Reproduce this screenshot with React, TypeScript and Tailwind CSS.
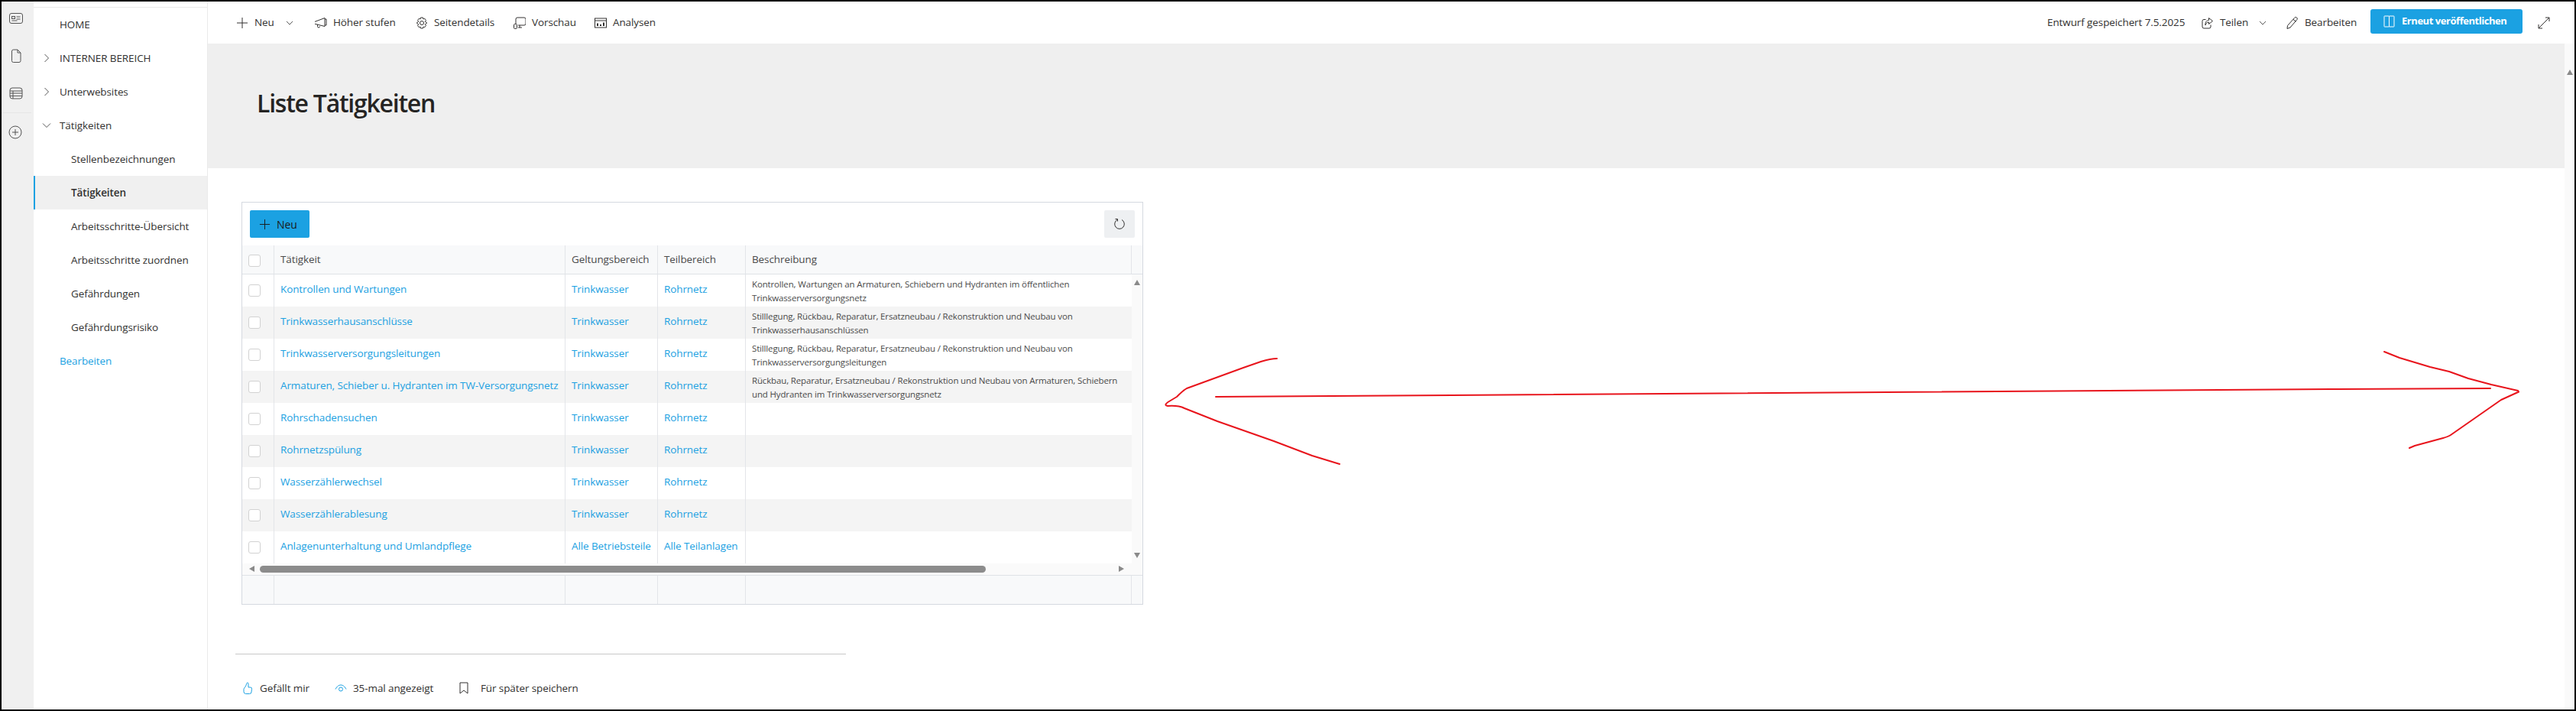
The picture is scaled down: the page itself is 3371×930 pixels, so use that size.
import React from "react";

const Ico = ({ children, className = "", size = 16, vb = 16 }: { children: React.ReactNode; className?: string; size?: number; vb?: number }) => (
  <svg width={size} height={size} viewBox={`0 0 ${vb} ${vb}`} fill="none" stroke="currentColor" strokeWidth="1" className={`shrink-0 ${className}`}>
    {children}
  </svg>
);

const Plus = ({ size = 16 }: { size?: number }) => <Ico size={size}><path d="M8 1v14M1 8h14" /></Ico>;
const ChevDown = () => <Ico size={10} vb={10}><path d="M1 3l4 4 4-4" /></Ico>;

const rows = [
  ["Kontrollen und Wartungen", "Trinkwasser", "Rohrnetz", "Kontrollen, Wartungen an Armaturen, Schiebern und Hydranten im öffentlichen", "Trinkwasserversorgungsnetz"],
  ["Trinkwasserhausanschlüsse", "Trinkwasser", "Rohrnetz", "Stilllegung, Rückbau, Reparatur, Ersatzneubau / Rekonstruktion und Neubau von", "Trinkwasserhausanschlüssen"],
  ["Trinkwasserversorgungsleitungen", "Trinkwasser", "Rohrnetz", "Stilllegung, Rückbau, Reparatur, Ersatzneubau / Rekonstruktion und Neubau von", "Trinkwasserversorgungsleitungen"],
  ["Armaturen, Schieber u. Hydranten im TW-Versorgungsnetz", "Trinkwasser", "Rohrnetz", "Rückbau, Reparatur, Ersatzneubau / Rekonstruktion und Neubau von Armaturen, Schiebern", "und Hydranten im Trinkwasserversorgungsnetz"],
  ["Rohrschadensuchen", "Trinkwasser", "Rohrnetz", "", ""],
  ["Rohrnetzspülung", "Trinkwasser", "Rohrnetz", "", ""],
  ["Wasserzählerwechsel", "Trinkwasser", "Rohrnetz", "", ""],
  ["Wasserzählerablesung", "Trinkwasser", "Rohrnetz", "", ""],
  ["Anlagenunterhaltung und Umlandpflege", "Alle Betriebsteile", "Alle Teilanlagen", "", ""],
];

const Check = () => <div className="ml-2 w-4 h-4 rounded-[3px] border border-[#d2d2d2] bg-white" />;

const NavItem = ({ label, chevron, indent, active, link }: { label: string; chevron?: "r" | "d"; indent?: boolean; active?: boolean; link?: boolean }) => (
  <div className={`h-11 flex items-center ${active ? "bg-[#f0f0f0] border-l-2 border-[#1ba1e2] font-semibold" : ""} ${link ? "text-[#1ba1e2]" : "text-[#323130]"}`}>
    <div className={`${active ? "w-[9px]" : "w-[11px]"} shrink-0`} />
    <div className="w-[12px] shrink-0 flex justify-center text-[#555]">
      {chevron === "r" && <Ico size={12} vb={12}><path d="M3.5 1l5 5-5 5" /></Ico>}
      {chevron === "d" && <Ico size={12} vb={12}><path d="M1 3.5l5 5 5-5" /></Ico>}
    </div>
    <div className={`${indent ? "w-[26px]" : "w-[11px]"} shrink-0`} />
    <span className="whitespace-nowrap">{label}</span>
  </div>
);

const CmdItem = ({ icon, label, className, gap = "ml-2" }: { icon: React.ReactNode; label: string; className: string; gap?: string }) => (
  <div className={`flex items-center shrink-0 ${className}`}>
    <span className="w-4 flex justify-center text-[#323130]">{icon}</span>
    <span className={`${gap} whitespace-nowrap`}>{label}</span>
  </div>
);

export default function App() {
  return (
    <div className="relative w-[3371px] h-[930px] box-border border-2 border-black bg-white overflow-hidden flex text-[13.5px] text-[#323130] font-['Open_Sans','Noto_Sans',sans-serif] tracking-[-0.1px]">
      {/* Rail */}
      <div className="w-[42px] shrink-0 bg-[#f0f0f0] flex flex-col text-[#555]">
        <div className="h-[146px] flex flex-col items-center pt-[13px] gap-[31px] pr-[2px] border-b border-[#e6e6e6] mr-[3px]">
          <Ico size={18} vb={18}><rect x="0.5" y="2.5" width="17" height="13" rx="2.5" /><rect x="3.5" y="6.5" width="4" height="3" /><path d="M9.5 7h5M9.5 10h5M3.5 12h7" /></Ico>
          <Ico size={18} vb={18}><path d="M3.5 3a2 2 0 0 1 2-2H11l4 4v10.5a2 2 0 0 1-2 2H5.5a2 2 0 0 1-2-2z" /><path d="M11 1v4h4" /></Ico>
          <Ico size={18} vb={18}><rect x="1" y="2" width="16" height="14" rx="3" /><path d="M1 6h16M1 9h16M1 12.5h16M5 6v10" /></Ico>
        </div>
        <div className="flex pl-[9px] pt-[16px]">
          <Ico size={18} vb={18}><circle cx="9" cy="9" r="8" /><path d="M9 5v8M5 9h8" /></Ico>
        </div>
      </div>

      {/* Nav */}
      <div className="w-[228px] shrink-0 pt-2 border-r border-[#eaeaea]">
        <div className="border-t border-[#eaeaea] -mt-px" />
        <NavItem label="HOME" />
        <NavItem label="INTERNER BEREICH" chevron="r" />
        <NavItem label="Unterwebsites" chevron="r" />
        <NavItem label="Tätigkeiten" chevron="d" />
        <NavItem label="Stellenbezeichnungen" indent />
        <NavItem label="Tätigkeiten" indent active />
        <NavItem label="Arbeitsschritte-Übersicht" indent />
        <NavItem label="Arbeitsschritte zuordnen" indent />
        <NavItem label="Gefährdungen" indent />
        <NavItem label="Gefährdungsrisiko" indent />
        <NavItem label="Bearbeiten" link />
      </div>

      {/* Main */}
      <div className="flex-1 min-w-0 flex flex-col">
        {/* Command bar */}
        <div className="h-[55px] shrink-0 flex items-center pl-[37px]">
          <CmdItem className="w-[103px]" label="Neu" icon={<Plus />} />
          <div className="-ml-[38px] w-[38px] flex text-[#555]"><ChevDown /></div>
          <CmdItem className="w-[132px]" label="Höher stufen" icon={
            <Ico><path d="M1 6l12-4.5v11L1 9.5a1.7 1.7 0 0 1 0-3.5z" /><path d="M3.5 10v2.5a1.5 1.5 0 0 0 3 0" /><path d="M13 3h2v8h-2" /></Ico>
          } />
          <CmdItem className="w-[128px]" label="Seitendetails" icon={
            <Ico><circle cx="8" cy="8" r="2.5" /><path d="M6.5 1h3l.5 2 1.8-.7 1.7 2.4-1.3 1.5L14.8 8l-2.6 1.8 1.3 1.5-1.7 2.4-1.8-.7-.5 2h-3l-.5-2-1.8.7-1.7-2.4 1.3-1.5L1.2 8l2.6-1.8-1.3-1.5 1.7-2.4 1.8.7z" /></Ico>
          } />
          <CmdItem className="w-[106px]" label="Vorschau" icon={
            <Ico><path d="M3 9V3a2 2 0 0 1 2-2h9a2 2 0 0 1 2 2v6a2 2 0 0 1-2 2H6" /><path d="M8 11v3M6 14h5" /><rect x="0.5" y="9.5" width="4" height="6" rx="1" /></Ico>
          } />
          <CmdItem className="w-[100px]" label="Analysen" icon={
            <Ico><rect x="0.5" y="2" width="15" height="12" /><path d="M0.5 5h15" /><path d="M3 12V8.5h2V12zM7 12V10h2v2zM11 12V7.5h2V12z" fill="currentColor" stroke="none" /></Ico>
          } />
          <div className="ml-auto flex items-center h-full pr-[32px]">
            <span className="whitespace-nowrap w-[202px]">Entwurf gespeichert 7.5.2025</span>
            <CmdItem className="w-[75px]" label="Teilen" icon={
              <Ico><path d="M12 10.5V13a2 2 0 0 1-2 2H3a2 2 0 0 1-2-2V5.5a2 2 0 0 1 2-2h2.5" /><path d="M9.5 1.5l5 4-5 4V7C7 7 5.5 8.5 5 11c-.5-4 1.5-6.5 4.5-6.5z" /></Ico>
            } />
            <div className="w-[36px] flex text-[#555]"><ChevDown /></div>
            <CmdItem className="w-[110px]" label="Bearbeiten" icon={
              <Ico><path d="M10.5 1.5a1.9 1.9 0 0 1 3.5 2L5 14l-4 1.5L1.5 11.5z" /><path d="M9 3.5l3.5 2.5" /></Ico>
            } />
            <div className="w-[199px] h-8 -mt-[4px] rounded-[3px] bg-[#1ba1e2] text-white text-[13px] font-bold flex items-center pl-[17px] tracking-[-0.45px]">
              <Ico className="text-white" size={16}><rect x="1" y="1" width="6.5" height="14" rx="0.5" /><rect x="7.5" y="1" width="6.5" height="14" rx="0.5" /></Ico>
              <span className="ml-2 whitespace-nowrap">Erneut veröffentlichen</span>
            </div>
            <div className="ml-[20px] text-[#323130]">
              <Ico><path d="M1 10v5h5M15 6V1h-5M1 15L15 1" /></Ico>
            </div>
          </div>
        </div>

        <div className="flex-1 min-h-0 flex">
          {/* Page */}
          <div className="flex-1 min-w-0">
            <div className="h-[163px] bg-[#efefef] flex items-center pl-[64px] pb-[7px]">
              <h1 className="text-[32px] font-semibold tracking-[-1.25px] text-[#252423]">Liste Tätigkeiten</h1>
            </div>

            {/* Web part */}
            <div className="ml-[44px] mt-[44px] w-[1180px] h-[527px] border border-[#d5d9e0] flex flex-col bg-white">
              <div className="h-[56px] shrink-0 flex justify-between px-[10px] pt-[10px]">
                <div className="w-[78px] h-9 rounded-[2px] bg-[#1ba1e2] flex items-center pl-[12px] text-[14px] text-[#1a1a1a]">
                  <Plus size={15} />
                  <span className="ml-[8px]">Neu</span>
                </div>
                <div className="w-10 h-9 rounded-[2px] bg-[#eef0f2] flex items-center justify-center">
                  <Ico><path d="M5 2.5a6.3 6.3 0 1 0 6 0" /><path d="M2.5 1.5h3v3" /></Ico>
                </div>
              </div>

              <div className="h-[38px] shrink-0 bg-[#f8f9fa] border-b border-[#dfe2e7] grid grid-cols-[42px_381px_121px_115px_505px_1fr] text-[#4a4a4a]">
                <div className="flex items-center border-r border-[#e3e5e9] pt-[3px]"><Check /></div>
                <div className="flex items-center pl-[8px] border-r border-[#e3e5e9]">Tätigkeit</div>
                <div className="flex items-center pl-[8px] border-r border-[#e3e5e9]">Geltungsbereich</div>
                <div className="flex items-center pl-[8px] border-r border-[#e3e5e9]">Teilbereich</div>
                <div className="flex items-center pl-[8px] border-r border-[#e3e5e9]">Beschreibung</div>
                <div />
              </div>

              <div className="flex">
                <div className="w-[1164px] shrink-0">
                  {rows.map((r, i) => (
                    <div key={i} className={`h-[42px] grid grid-cols-[42px_381px_121px_115px_505px] ${i % 2 === 1 ? "bg-[#f4f4f4]" : "bg-white"} text-[#1ba1e2]`}>
                      <div className="flex items-center border-r border-[#e3e5e9]"><Check /></div>
                      <div className="flex items-center pl-[8px] pb-[4px] border-r border-[#e3e5e9] whitespace-nowrap">{r[0]}</div>
                      <div className="flex items-center pl-[8px] pb-[4px] border-r border-[#e3e5e9] whitespace-nowrap">{r[1]}</div>
                      <div className="flex items-center pl-[8px] pb-[4px] border-r border-[#e3e5e9] whitespace-nowrap">{r[2]}</div>
                      <div className="pl-[8px] pt-[4px] text-[11.5px] leading-[18px] tracking-[-0.15px] text-[#4a4a4a] whitespace-nowrap">
                        <div>{r[3]}</div>
                        <div>{r[4]}</div>
                      </div>
                    </div>
                  ))}
                </div>
                <div className="flex-1 bg-[#fafafa] flex flex-col justify-between items-center pt-[7px] pb-[7px] text-[#8a8a8a]">
                  <div className="w-0 h-0 border-x-[4.5px] border-x-transparent border-b-[7px] border-b-[#8a8a8a]" />
                  <div className="w-0 h-0 border-x-[4.5px] border-x-transparent border-t-[7px] border-t-[#8a8a8a]" />
                </div>
              </div>

              <div className="h-[16px] shrink-0 bg-[#fafafa] border-b border-[#dfe2e7] flex items-center pb-[1px]">
                <div className="ml-[9px] w-0 h-0 border-y-[4.5px] border-y-transparent border-r-[7px] border-r-[#8a8a8a]" />
                <div className="ml-[7px] w-[950px] h-[9px] rounded-full bg-[#8c8c8c]" />
                <div className="ml-[174px] w-0 h-0 border-y-[4.5px] border-y-transparent border-l-[7px] border-l-[#8a8a8a]" />
              </div>

              <div className="flex-1 bg-[#f8f9fa] grid grid-cols-[42px_381px_121px_115px_505px_1fr]">
                <div className="border-r border-[#e3e5e9]" />
                <div className="border-r border-[#e3e5e9]" />
                <div className="border-r border-[#e3e5e9]" />
                <div className="border-r border-[#e3e5e9]" />
                <div className="border-r border-[#e3e5e9]" />
                <div />
              </div>
            </div>

            {/* Divider + footer */}
            <div className="ml-[36px] mt-[64px] w-[799px] border-t border-[#c8c8c8]" />
            <div className="ml-[44px] mt-[34px] h-5 flex items-center">
              <CmdItem className="w-[122px]" label="Gefällt mir" icon={
                <span className="text-[#1ba1e2]"><Ico size={16}><path d="M7.5 1a1.3 1.3 0 0 1 1.5 1.3V7h2.5a2 2 0 0 1 2 2.3L13 13a2.5 2.5 0 0 1-2.5 2.5h-5A2.8 2.8 0 0 1 3 12.8V9.5c0-1.500 3.500-4 3.500-7z" /></Ico></span>
              } />
              <CmdItem className="w-[161px]" label="35-mal angezeigt" icon={
                <span className="text-[#1ba1e2]"><Ico size={16}><path d="M1 9.5C3 5.500 5.500 4 8 4s5 1.500 7 5.500" /><circle cx="8" cy="9.5" r="2.5" /></Ico></span>
              } />
              <CmdItem className="w-[170px]" gap="ml-[14px]" label="Für später speichern" icon={
                <Ico size={16}><path d="M3 1h10v14l-5-4-5 4z" /></Ico>
              } />
            </div>
          </div>

          {/* Page scrollbar */}
          <div className="w-[13px] shrink-0 bg-[#fafafa] flex justify-center pt-[34px]">
            <div className="w-0 h-0 border-x-[4.5px] border-x-transparent border-b-[7px] border-b-[#8a8a8a]" />
          </div>
        </div>
      </div>

      {/* Hand-drawn red arrow over the page */}
      <svg className="absolute -left-[2px] -top-[2px] pointer-events-none" width="3371" height="930" fill="none" stroke="#e8141c" strokeWidth="2" strokeLinecap="round" strokeLinejoin="round">
        <path d="M1591 519L1900 517L3060 509L3259 508" />
        <path d="M1671 469Q1663 469 1650 473L1627 481L1553 508Q1548 511 1540 519L1530 525Q1522 530 1528 531Q1542 530 1550 534L1593 551L1667 577L1717 596L1753 607" />
        <path d="M3120 460L3140 468L3180 480L3205 486L3230 495L3260 503L3295 511Q3297 513 3295 513L3273 523L3207 569Q3204 571 3197 573L3160 583L3153 586" />
      </svg>
    </div>
  );
}
